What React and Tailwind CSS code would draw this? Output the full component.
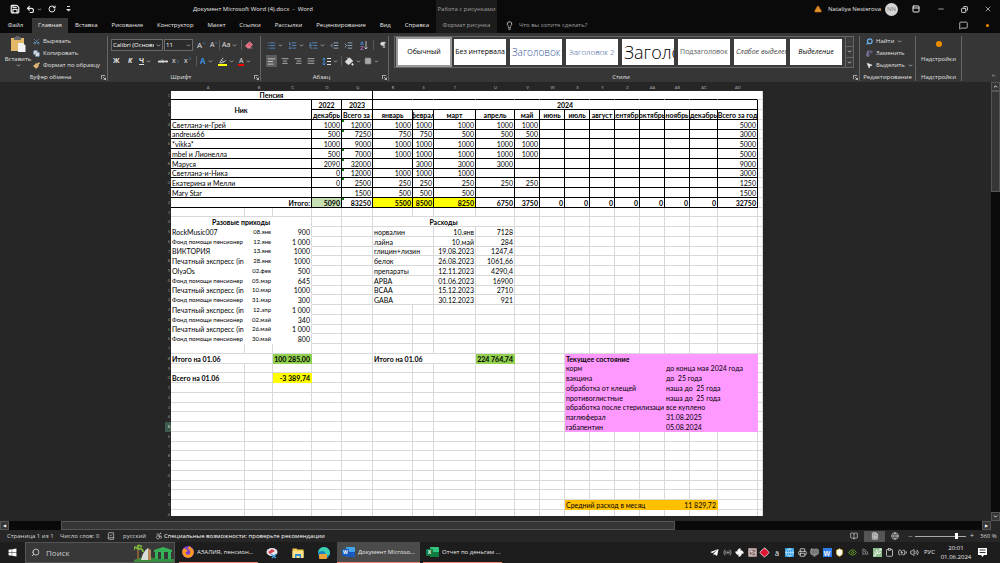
import React from 'react'
import {
  Save, Undo2, RotateCw, ChevronDown, ChevronUp, Scissors, Copy, Paintbrush, Clipboard, Eraser,
  List, ListOrdered, ListTree, IndentDecrease, IndentIncrease, Pilcrow, AlignLeft, AlignCenter,
  AlignRight, AlignJustify, PaintBucket, Grid2x2, Lightbulb, TriangleAlert, Minus, X, MessageSquare,
  Search, Replace, MousePointer2, BookOpen, FileText, Globe, Accessibility, BookCheck, Fan,
  Shield, Wifi, BatteryCharging, Volume2, Monitor, Usb, Eye, Highlighter,
  PanelTop, Radio, Image, Printer
} from 'lucide-react'
import { FaWindows, FaFirefoxBrowser, FaTelegramPlane } from 'react-icons/fa'

const tabs = ['Вставка', 'Рисование', 'Конструктор', 'Макет', 'Ссылки', 'Рассылки', 'Рецензирование', 'Вид', 'Справка']

const styleCards = [
  { name: 'Обычный', cls: 'justify-center text-[7px] text-black' },
  { name: 'Без интервала', cls: 'justify-center text-[7px] text-black' },
  { name: 'Заголовок 1', cls: 'pl-[2px] text-[10px] font-light text-[#2f5496]' },
  { name: 'Заголовок 2', cls: 'justify-center text-[8px] font-light text-[#2f5496]' },
  { name: 'Заголовок', cls: 'pl-[2px] text-[18px] font-light text-black' },
  { name: 'Подзаголовок', cls: 'justify-center text-[7px] text-[#5a5a5a]' },
  { name: 'Слабое выделение', cls: 'pl-[2px] text-[7px] italic text-[#404040]' },
  { name: 'Выделение', cls: 'justify-center text-[7px] italic text-black' }
]

// Sheet columns, D is followed by Q because the ones between are hidden
const columns = ['A', 'B', 'C', 'D', 'Q', 'R', 'S', 'T', 'U', 'V', 'W', 'X', 'Y', 'Z', 'AA', 'AB', 'AC', 'AD', '']
const colWidths = [74, 28, 39, 30, 31, 40, 21, 42, 39, 25, 25, 25, 25, 25, 25, 25, 28, 40, 5]

const members = [
  ['Светлана-и-Грей', '1000', '12000', '1000', '1000', '1000', '1000', '1000', '5000'],
  ['andreus66', '500', '7250', '750', '750', '500', '500', '500', '3000'],
  ['*vikka*', '1000', '9000', '1000', '1000', '1000', '1000', '1000', '5000'],
  ['mbel и Лионелла', '500', '7000', '1000', '1000', '1000', '1000', '1000', '5000'],
  ['Маруся', '2090', '32000', '', '3000', '3000', '3000', '', '9000'],
  ['Светлана-и-Ника', '0', '12000', '1000', '1000', '1000', '', '', '3000'],
  ['Екатерина и Мелли', '0', '2500', '250', '250', '250', '250', '250', '1250'],
  ['Mary Star', '', '1500', '500', '500', '500', '', '', '1500']
]

const incomes = [
  ['RockMusic007', '08.янв', '900'],
  ['Фонд помощи пенсионер', '12.янв', '1 000'],
  ['ВИКТОРИЯ', '13.янв', '1000'],
  ['Печатный экспресс (in', '28.янв', '1000'],
  ['OlyaOs', '02.фев', '500'],
  ['Фонд помощи пенсионер', '05.мар', '645'],
  ['Печатный экспресс (in', '10.мар', '1000'],
  ['Фонд помощи пенсионер', '31.мар', '300'],
  ['Печатный экспресс (in', '12.апр', '1 000'],
  ['Фонд помощи пенсионер', '02.май', '340'],
  ['Печатный экспресс (in', '26.май', '1 000'],
  ['Фонд помощи пенсионер', '30.май', '800']
]

const expenses = [
  ['норвалин', '10.янв', '7128'],
  ['лайна', '10.май', '284'],
  ['глицин+лизин', '19.08.2023', '1247,4'],
  ['белок', '26.08.2023', '1061,66'],
  ['препараты', '12.11.2023', '4290,4'],
  ['АРВА', '01.06.2023', '16900'],
  ['BCAA', '15.12.2023', '2710'],
  ['GABA', '30.12.2023', '921']
]

const state = [
  ['корм', 'до конца мая 2024 года'],
  ['вакцина', 'до  25 года'],
  ['обработка от клещей', 'наша до  25 года'],
  ['противоглистные', 'наша до  25 года'],
  ['обработка после стерилизаци', 'все куплено'],
  ['паглюферал', '31.08.2025'],
  ['габапентин', '05.08.2024']
]

const black = 'border-black'
const none = 'border-transparent'
const pink = 'bg-[#ff99ff] border-[#ff99ff]'
const orange = 'bg-[#ffc000] border-[#ffc000]'

// Every row is a map of column index to cell, columns without an entry are drawn as empty grid cells
const buildRows = () => {
  const rows = Array.from({ length: 44 }, () => ({}))

  rows[0][0] = { text: 'Пенсия', span: 5, align: 'center', bold: true, cls: black }
  for (let c = 5; c < 18; c++) rows[0][c] = { cls: 'border-r-transparent border-b-black' }
  rows[1][0] = { text: 'Ник', span: 3, rowSpan: 2, align: 'center', bold: true, cls: black }
  rows[1][3] = { text: '2022', align: 'center', bold: true, cls: black }
  rows[1][4] = { text: '2023', align: 'center', bold: true, cls: black }
  rows[1][5] = { text: '2024', span: 13, align: 'center', bold: true, cls: black }

  const heads = ['декабрь', 'Всего за г', 'январь', 'феврал', 'март', 'апрель', 'май', 'июнь', 'июль', 'август', 'сентябрь', 'октябрь', 'ноябрь', 'декабрь', 'Всего за год']
  rows[2][0] = { covered: true, span: 3 }
  heads.forEach((text, i) => {
    rows[2][i + 3] = { text, align: i === 1 ? 'left' : 'center', bold: true, cls: black }
  })

  members.forEach((m, i) => {
    const row = rows[i + 3]
    row[0] = { text: m[0], span: 3, cls: black }
    for (let c = 3; c < 18; c++) row[c] = { cls: black }
    m.slice(1, 8).forEach((text, k) => {
      row[k + 3] = { text, align: 'right', cls: black, flag: k === 1 && i !== 2 && i !== 7 }
    })
    row[17] = { text: m[8], align: 'right', cls: black }
  })

  const totals = ['5090', '83250', '5500', '8500', '8250', '6750', '3750', '0', '0', '0', '0', '0', '0', '0', '32750']
  rows[11][0] = { text: 'Итого:', span: 3, align: 'right', bold: true, cls: black }
  totals.forEach((text, i) => {
    const fill = i === 0 ? 'bg-[#c6e0b4] border-black' : i > 1 && i < 5 ? 'bg-[#ffff00] border-black' : black
    rows[11][i + 3] = { text, align: 'right', bold: true, cls: fill, flag: i === 1 }
  })

  rows[13][0] = { text: 'Разовые приходы', span: 3, align: 'center', bold: true, cls: 'border-r-[#d9d9d9] border-b-transparent' }
  rows[13][5] = { text: 'Расходы', span: 4, align: 'center', bold: true }
  incomes.forEach((item, i) => {
    rows[i + 14][0] = { text: item[0], small: item[0].startsWith('Фонд'), cls: none }
    rows[i + 14][1] = { text: item[1], align: 'right', small: true, cls: none }
    rows[i + 14][2] = { text: item[2], align: 'right', cls: 'border-r-[#d9d9d9] border-b-transparent' }
  })
  expenses.forEach((item, i) => {
    rows[i + 14][5] = { text: item[0], span: 2 }
    rows[i + 14][7] = { text: item[1], align: 'right' }
    rows[i + 14][8] = { text: item[2], align: 'right' }
  })

  rows[27][0] = { text: 'Итого на 01.06', span: 2, bold: true }
  rows[27][2] = { text: '100 285,00', align: 'right', bold: true, cls: 'bg-[#92d050] border-[#92d050]' }
  rows[27][5] = { text: 'Итого на 01.06', span: 3, bold: true }
  rows[27][8] = { text: '224 764,74', align: 'right', bold: true, cls: 'bg-[#92d050] border-[#92d050]' }
  rows[29][0] = { text: 'Всего на 01.06', bold: true }
  rows[29][2] = { text: '-3 389,74', align: 'right', bold: true, cls: 'bg-[#ffff00] border-[#ffff00]' }

  rows[27][11] = { text: 'Текущее состояние', span: 7, bold: true, cls: pink }
  state.forEach((item, i) => {
    rows[i + 28][11] = { text: item[0], span: 4, cls: pink }
    rows[i + 28][15] = { text: item[1], span: 3, cls: pink }
  })
  rows[42][11] = { text: 'Средний расход в месяц', span: 4, cls: orange }
  rows[42][15] = { text: '11 829,72', span: 2, align: 'right', cls: orange }
  return rows
}

const alignments = { left: 'justify-start pl-px', center: 'justify-center', right: 'justify-end pr-px' }

const Cell = ({ cell = {} }) => (
  <td
    colSpan={cell.span || 1}
    rowSpan={cell.rowSpan || 1}
    className={`relative border-r border-b p-0 align-middle ${cell.cls || 'border-[#d9d9d9]'}`}
  >
    {cell.flag && <span className="absolute left-0 top-0 w-[2px] h-[2px] bg-[#107c10]" />}
    <div className={`flex h-2 overflow-hidden whitespace-pre leading-2 ${alignments[cell.align || 'left']} ${cell.bold ? 'font-bold' : ''} ${cell.small ? 'text-[6px]' : ''}`}>
      <span className="shrink-0">{cell.text}</span>
    </div>
  </td>
)

const Sheet = () => (
  <table className="table-fixed w-[598px] border-separate border-spacing-0 font-['Lato','Open_Sans',sans-serif] text-[7px] leading-2 text-black">
    <colgroup>
      <col className="w-[6px]" />
      {colWidths.map((w, i) => <col key={i} style={{ width: w }} />)}
    </colgroup>
    <thead>
      <tr className="h-[7px] text-[4px] leading-[7px] text-[#b0b0b0]">
        <th className="p-0" />
        {columns.map((name, i) => <th key={i} className="p-0 font-normal">{name}</th>)}
      </tr>
    </thead>
    <tbody className="bg-white [&>tr]:h-[10px] [&>tr:nth-child(4n+1)]:h-[9px]">
      {buildRows().map((row, r) => {
        const cells = []
        for (let c = 0; c < columns.length; c += row[c]?.span || 1) {
          if (!row[c]?.covered) cells.push(<Cell key={c} cell={row[c]} />)
        }
        return (
          <tr key={r}>
            <th className={`p-0 pr-px text-right text-[4px] font-normal leading-2 ${r === 34 ? 'bg-[#3d5a4c] text-white' : 'bg-[#262626] text-[#9a9a9a]'}`}>{(r + 1) % 10}</th>
            {cells}
          </tr>
        )
      })}
    </tbody>
  </table>
)

const Drop = () => <ChevronDown className="w-[5px] h-[5px] shrink-0" strokeWidth={3} />

const Divider = () => <span className="h-[10px] w-px bg-[#5a5a5a]" />

const IconButton = ({ label, children, drop, cls = '' }) => (
  <button aria-label={label} className={`flex h-3 items-center gap-[2px] ${cls}`}>
    {children}
    {drop && <Drop />}
  </button>
)

const Group = ({ title, cls, children, launcher }) => (
  <section className={`flex flex-col pt-[3px] ${cls}`}>
    <div className="flex flex-1 border-r border-[#666] mb-px flex-col">
      <div className="flex-1">{children}</div>
      <div className="flex h-2 items-center">
        <h2 className="flex-1 whitespace-nowrap text-center text-[6px] leading-2 text-[#e0e0e0]">{title}</h2>
        {launcher && (
          <button aria-label={`${title}: параметры`} className="mr-px">
            <svg viewBox="0 0 6 6" className="w-[5px] h-[5px]" fill="none" stroke="#ccc"><path d="M.5 5V.5H5M2.5 2.5l3 3M5.5 3v2.5H3" /></svg>
          </button>
        )}
      </div>
    </div>
  </section>
)

const TitleBar = () => (
  <header className="flex h-[18px] items-stretch bg-[#0a0a0a] text-[6px] text-[#e8e8e8]">
    <div className="flex w-[193px] items-center pl-[10px]">
      <button aria-label="Сохранить"><Save className="w-[10px] h-[10px]" strokeWidth={3} /></button>
      <button aria-label="Отменить" className="ml-[6px] flex items-center gap-[2px]"><Undo2 className="w-[9px] h-[9px]" strokeWidth={3} /><Drop /></button>
      <button aria-label="Повторить" className="ml-[6px]"><RotateCw className="w-2 h-2" strokeWidth={3} /></button>
      <button aria-label="Настройка панели" className="ml-[10px]">
        <svg viewBox="0 0 5 6" className="h-[6px] w-[5px]" fill="#ddd"><path d="M1 0h3v1H1zM0 3h5L2.500 5.500z" /></svg>
      </button>
    </div>
    <h1 className="flex w-[243px] items-center whitespace-pre">Документ Microsoft Word (4).docx  -  Word</h1>
    <div className="flex w-[61px] items-center justify-center bg-[#1c1c1c] text-[#a0a0a0] whitespace-nowrap">Работа с рисунками</div>
    <div className="ml-auto flex items-center pr-2">
      <TriangleAlert className="w-2 h-2 fill-[#e8962e] text-[#b86a10]" />
      <span className="ml-[6px] whitespace-nowrap">Nataliya Nesterova</span>
      <span className="ml-1 flex h-[13px] w-[13px] items-center justify-center rounded-full bg-[#d5d5d5] text-[#777]">NN</span>
      <button aria-label="Параметры ленты" className="ml-[14px]"><PanelTop className="w-2 h-2" strokeWidth={3} /></button>
      <button aria-label="Свернуть" className="ml-[17px]"><Minus className="w-2 h-2" /></button>
      <button aria-label="Восстановить" className="ml-[16px]"><Copy className="w-[7px] h-[7px] -scale-x-100" strokeWidth={3} /></button>
      <button aria-label="Закрыть" className="ml-[16px]"><X className="w-2 h-2" /></button>
    </div>
  </header>
)

const TabBar = () => (
  <nav className="flex h-[15px] items-stretch bg-[#0a0a0a] text-[6px] text-[#e8e8e8]">
    <button className="w-[32px] pr-px">Файл</button>
    <button className="w-[36px] bg-[#363636]">Главная</button>
    <div className="flex w-[368px] justify-around">
      {tabs.map((name) => <button key={name}>{name}</button>)}
    </div>
    <button className="w-[61px] bg-[#1c1c1c] text-[#a0a0a0] whitespace-nowrap">Формат рисунка</button>
    <label className="flex items-center pl-[8px]">
      <Lightbulb className="w-[9px] h-[9px]" />
      <input aria-label="Что вы хотите сделать?" placeholder="Что вы хотите сделать?" className="ml-[5px] w-24 bg-transparent outline-none placeholder:text-[#a0a0a0]" />
    </label>
    <div className="ml-auto flex items-center gap-[18px] pr-[11px]">
      <button aria-label="Примечания"><MessageSquare className="w-[9px] h-[9px]" /></button>
      <span className="h-[3px] w-[3px] rounded-full bg-[#f08c00]" />
    </div>
  </nav>
)

const Combo = ({ label, value, cls }) => (
  <div className={`relative h-3 border border-[#6a6a6a] bg-[#2b2b2b] ${cls}`}>
    <select aria-label={label} className="block h-full w-full appearance-none overflow-hidden bg-transparent pl-px pr-2 text-[6px] leading-[10px] text-white">
      <option>{value}</option>
    </select>
    <ChevronDown className="pointer-events-none absolute right-px top-[3px] w-[5px] h-[5px]" strokeWidth={3} />
  </div>
)

const SortIcon = () => (
  <svg viewBox="0 0 8 9" className="h-[9px] w-2" fill="none">
    <path d="M.5 4L2 .5 3.500 4M1 3h2" stroke="#3c8fdd" strokeWidth=".8" />
    <path d="M.5 5.500h3L.5 8.500h3" stroke="#b06ac8" strokeWidth=".8" />
    <path d="M6 0v8M4.500 6.500L6 8l1.500-1.500" stroke="#ddd" strokeWidth=".8" />
  </svg>
)

const SpacingIcon = () => (
  <svg viewBox="0 0 9 9" className="h-[9px] w-[9px]" fill="none">
    <path d="M2 1v7M.5 2.500L2 1l1.500 1.500M.5 6.500L2 8l1.500-1.500" stroke="#3c8fdd" />
    <path d="M5 1.500h4M5 4.500h4M5 7.500h4" stroke="#ddd" />
  </svg>
)

const Ribbon = () => (
  <div className="flex h-[49px] bg-[#363636] text-[6px] leading-2 text-[#e0e0e0]">
    <Group title="Буфер обмена" cls="w-[108px]" launcher>
      <div className="flex pl-[5px]">
        <button className="flex w-[26px] flex-col items-center">
          <svg viewBox="0 0 16 16" className="h-4 w-4">
            <path d="M1 2h13v13H1z" fill="#e5b868" />
            <path d="M4 1h2a1.500 1.500 0 0 1 3 0h2v3H4z" fill="#666" />
            <path d="M8 7h5l2.500 2.500V16H8z" fill="#f2f2f2" />
          </svg>
          <span className="mt-[3px]">Вставить</span>
          <Drop />
        </button>
        <div className="flex flex-col items-start gap-[2px] pl-[2px]">
          <button className="flex h-[10px] items-center gap-[3px]"><Scissors className="h-[7px] w-[7px] -rotate-90 text-[#7ba7d4]" />Вырезать</button>
          <button className="flex h-[10px] items-center gap-[3px]"><Copy className="h-[7px] w-[7px] fill-[#ddd] text-[#5b8fc7]" />Копировать</button>
          <button className="flex h-[10px] items-center gap-[3px] whitespace-nowrap"><Paintbrush className="h-[7px] w-[7px] fill-[#e5b868] text-[#e5c898]" />Формат по образцу</button>
        </div>
      </div>
    </Group>

    <Group title="Шрифт" cls="w-[153px]" launcher>
      <div className="flex items-center pl-[3px] pt-[3px]">
        <Combo label="Шрифт" value="Calibri (Основной текст)" cls="w-[52px]" />
        <Combo label="Размер" value="11" cls="ml-px w-[29px]" />
        <IconButton label="Увеличить шрифт" cls="ml-1 w-[13px] text-[8px]">A<ChevronUp className="-ml-[2px] mb-1 h-1 w-1 text-[#3c8fdd]" strokeWidth={4} /></IconButton>
        <IconButton label="Уменьшить шрифт" cls="w-[9px] text-[7px]">A<ChevronDown className="-ml-[2px] mb-1 h-1 w-1 text-[#3c8fdd]" strokeWidth={4} /></IconButton>
        <Divider />
        <IconButton label="Регистр" drop cls="ml-[2px] mr-[4px] text-[7px]">Aa</IconButton>
        <Divider />
        <IconButton label="Очистить форматирование" cls="ml-[3px]"><Eraser className="h-2 w-2 fill-[#e0607a] text-[#e89aac]" /></IconButton>
      </div>
      <div className="flex items-center pl-[5px] pt-1 text-[7px]">
        <IconButton label="Полужирный" cls="w-[15px]"><b>Ж</b></IconButton>
        <IconButton label="Курсив" cls="w-[11px]"><b><i>К</i></b></IconButton>
        <IconButton label="Подчеркнутый" drop cls="w-[19px]"><b className="underline">Ч</b></IconButton>
        <IconButton label="Зачеркнутый" cls="w-[14px]"><s className="text-[6px]">abc</s></IconButton>
        <IconButton label="Подстрочный" cls="w-3">x<sub className="-ml-px text-[4px] text-[#3c8fdd]">2</sub></IconButton>
        <IconButton label="Надстрочный" cls="w-3">x<sup className="-ml-px text-[4px] text-[#3c8fdd]">2</sup></IconButton>
        <Divider />
        <IconButton label="Эффекты" drop cls="w-[21px] pl-[3px]"><span className="text-[8px] font-bold text-[#3c8fdd]">A</span></IconButton>
        <IconButton label="Выделение цветом" drop cls="w-[20px]"><Highlighter className="h-[9px] w-[9px] border-b-2 border-[#ffff00]" strokeWidth={3} /></IconButton>
        <IconButton label="Цвет текста" drop><span className="h-[9px] border-b-2 border-[#ff0000] px-px leading-[7px]">A</span></IconButton>
      </div>
    </Group>

    <Group title="Абзац" cls="w-[128px]" launcher>
      <div className="flex items-center gap-[5px] pl-[6px] pt-[3px]">
        <IconButton label="Маркеры" drop><List className="h-[9px] w-[9px] text-[#5d9bd8]" /></IconButton>
        <IconButton label="Нумерация" drop><ListOrdered className="h-[9px] w-[9px] text-[#5d9bd8]" /></IconButton>
        <IconButton label="Многоуровневый список" drop><ListTree className="h-[9px] w-[9px] text-[#5d9bd8]" /></IconButton>
        <IconButton label="Уменьшить отступ"><IndentDecrease className="h-[9px] w-[9px] text-[#a8c8e8]" /></IconButton>
        <IconButton label="Увеличить отступ"><IndentIncrease className="h-[9px] w-[9px] text-[#a8c8e8]" /></IconButton>
        <IconButton label="Сортировка" cls="ml-[2px]"><SortIcon /></IconButton>
        <Divider />
        <IconButton label="Знаки"><Pilcrow className="h-2 w-2 fill-[#ddd]" /></IconButton>
      </div>
      <div className="flex items-center gap-[3px] pl-[5px] pt-1">
        <IconButton label="По левому краю" cls="bg-[#5c5c5c] px-px"><AlignLeft className="h-[9px] w-[9px]" /></IconButton>
        <IconButton label="По центру" cls="px-px"><AlignCenter className="h-2 w-2" /></IconButton>
        <IconButton label="По правому краю" cls="px-px"><AlignRight className="h-2 w-2" /></IconButton>
        <IconButton label="По ширине" cls="px-px"><AlignJustify className="h-2 w-2" /></IconButton>
        <IconButton label="Интервал" drop cls="ml-[3px]"><SpacingIcon /></IconButton>
        <Divider />
        <IconButton label="Заливка" drop><PaintBucket className="h-[9px] w-[9px] fill-[#ddd]" /></IconButton>
        <IconButton label="Границы" drop><Grid2x2 className="h-2 w-2 fill-[#aaa] text-[#777]" /></IconButton>
      </div>
    </Group>

    <Group title="Стили" cls="min-w-0 flex-1" launcher>
      <div className="mx-[5px] flex h-8 items-stretch overflow-hidden border border-[#666] bg-[#3c3c3c]">
        <div className="flex flex-1 items-center gap-[4px] overflow-hidden pl-[3px]">
          {styleCards.map((card, i) => (
            <button
              key={card.name}
              className={`flex h-[26px] w-[52px] shrink-0 items-center overflow-hidden whitespace-nowrap bg-white ${i === 0 ? 'outline-2 outline-[#9a9a9a]' : ''} ${card.cls}`}
            >
              {card.name}
            </button>
          ))}
        </div>
        <div className="flex w-2 flex-col divide-y divide-[#666] border-l border-[#666]">
          <button aria-label="Вверх" className="flex flex-1 items-center justify-center text-[#666]"><ChevronUp className="h-[5px] w-[5px]" /></button>
          <button aria-label="Вниз" className="flex flex-1 items-center justify-center"><ChevronDown className="h-[5px] w-[5px]" strokeWidth={4} /></button>
          <button aria-label="Все стили" className="flex flex-1 items-center justify-center"><ChevronDown className="h-[5px] w-[5px]" strokeWidth={4} /></button>
        </div>
      </div>
    </Group>

    <Group title="Редактирование" cls="w-[56px]">
      <div className="flex flex-col items-start gap-[2px] pl-[6px]">
        <button className="flex h-[10px] items-center gap-[3px]"><Search className="h-[7px] w-[7px] -scale-x-100 text-[#6ab0ee]" strokeWidth={4} />Найти<Drop /></button>
        <button className="flex h-[10px] items-center gap-[3px]"><Replace className="h-[7px] w-[7px] text-[#9a8fd0]" strokeWidth={3} />Заменить</button>
        <button className="flex h-[10px] items-center gap-[3px]"><MousePointer2 className="h-[7px] w-[7px] fill-[#eee]" />Выделить<Drop /></button>
      </div>
    </Group>

    <Group title="Надстройки" cls="w-[46px]">
      <button className="flex w-full flex-col items-center pt-[5px]">
        <span className="h-[6px] w-[6px] rounded-full bg-[#f08c00]" />
        <span className="mt-2">Надстройки</span>
      </button>
    </Group>
    <div className="flex w-[38px] items-end justify-end p-1">
      <button aria-label="Свернуть ленту"><ChevronUp className="h-[5px] w-[5px]" strokeWidth={3} /></button>
    </div>
  </div>
)

const StatusBar = () => (
  <footer className="flex h-3 items-center bg-[#262626] pl-[7px] text-[6px] leading-2 text-[#d8d8d8] whitespace-nowrap">
    <span className="w-[53px]">Страница 1 из 1</span>
    <span className="w-[47px]">Число слов: 0</span>
    <BookCheck className="h-2 w-2" />
    <span className="ml-2 w-[32px]">русский</span>
    <Accessibility className="h-2 w-2" />
    <span className="ml-px font-medium text-white">Специальные возможности: проверьте рекомендации</span>
    <div className="ml-auto flex items-center">
      <button aria-label="Режим чтения" className="mr-[6px]"><BookOpen className="h-2 w-2" /></button>
      <button aria-label="Разметка страницы" className="flex h-[11px] w-[21px] items-center justify-center bg-[#555]"><FileText className="h-2 w-2 fill-[#999]" /></button>
      <button aria-label="Веб-документ" className="ml-[6px]"><Globe className="h-2 w-2" /></button>
      <button aria-label="Мельче" className="ml-[9px]"><Minus className="h-[5px] w-[5px]" /></button>
      <input
        type="range"
        aria-label="Масштаб"
        defaultValue={84}
        className="mx-[2px] h-2 w-[51px] appearance-none bg-[linear-gradient(#aaa,#aaa)] bg-[length:100%_1px] bg-center bg-no-repeat [&::-webkit-slider-thumb]:h-[6px] [&::-webkit-slider-thumb]:w-[3px] [&::-webkit-slider-thumb]:appearance-none [&::-webkit-slider-thumb]:bg-white"
      />
      <button aria-label="Крупнее" className="w-2 text-[7px]">+</button>
      <span className="w-[24px] pl-[4px]">360 %</span>
    </div>
  </footer>
)

const TaskButton = ({ icon, active, children }) => (
  <button className={`flex items-center gap-[3px] border-b border-[#f08a78] pl-[3px] whitespace-nowrap text-[6px] ${active ? 'w-[83px] bg-[#4b4b4b] pl-[5px]' : 'w-[79px]'}`}>
    {icon}
    <span className="truncate">{children}</span>
  </button>
)

const OfficeIcon = ({ letter, light, dark }) => (
  <svg viewBox="0 0 13 12" className="h-3 w-[13px] shrink-0">
    <rect x="4" y="1" width="9" height="10" rx="1" fill={light} />
    <path d="M4 6h9v4a1 1 0 0 1-1 1H5a1 1 0 0 1-1-1z" fill={dark} />
    <rect y="3" width="7" height="7" rx="1" fill={dark} />
    <text x="3.500" y="8" fontSize="5" fontWeight="700" textAnchor="middle" fill="#fff">{letter}</text>
  </svg>
)

const SearchArt = () => (
  <svg viewBox="0 0 40 18" className="h-[18px] w-[40px] shrink-0">
    <path d="M0 16q10-5 20-2t20 1v3H0z" fill="#3f8a3a" />
    <path d="M4 15V5" stroke="#9a6b3a" strokeWidth="1.500" />
    <path d="M4 5Q0 1 0 6M4 5Q3-1 8 3M4 5q5-1 5 3" stroke="#7db53c" strokeWidth="2" fill="none" />
    <path d="M7 16Q9 7 14 4l3 12z" fill="#d7dfd8" />
    <path d="M14 4v12h3V6z" fill="#b58a5a" />
    <path d="M20 6l9-3 9 3v2H20zM21 8h3v8h-3zM27 8h3v8h-3zM34 8h3v8h-3z" fill="#35b257" />
    <path d="M19 15h20v2H19z" fill="#2a9447" />
  </svg>
)

const FirefoxIcon = () => (
  <span className="flex h-3 w-3 shrink-0 items-center justify-center rounded-full bg-[#7a3fd0]">
    <FaFirefoxBrowser className="h-3 w-3 text-[#ff9a1c]" />
  </span>
)

const trayIcons = [
  { Icon: FaTelegramPlane, cls: 'text-white' },
  { Icon: Radio, cls: 'text-[#aaa]' },
  { Icon: Fan, cls: 'fill-white' },
  { Icon: Image, cls: 'bg-[#8a6a6a] text-[#eee]' },
  { Icon: Grid2x2, cls: 'rotate-45 fill-[#e01030] text-[#eee]' },
  { text: 'ā' },
  { Icon: Globe, cls: 'bg-[#2d9be0] text-[#bfe6ff]' },
  { Icon: Printer, cls: '' },
  { Icon: Monitor, cls: 'fill-[#777] text-[#aaa]' },
  { text: 'w' },
  { Icon: Shield, cls: 'fill-white text-[#f2b21a]' },
  { Icon: Eye, cls: 'text-[#6fb52c]' },
  { Icon: Wifi, cls: 'rotate-45 text-[#aaa]' },
  { Icon: Usb, cls: 'bg-[#8fbf8f] text-white' },
  { Icon: Clipboard, cls: '' },
  { Icon: BatteryCharging, cls: '' },
  { Icon: Volume2, cls: '' }
]

const Taskbar = () => (
  <div className="flex h-[21px] items-stretch bg-[#1d1d1d] text-[6px] text-[#e8e8e8]">
    <button aria-label="Пуск" className="flex w-[25px] items-center justify-center"><FaWindows className="h-[9px] w-[9px] text-white" /></button>
    <label className="flex w-[150px] items-center overflow-hidden border border-[#555] bg-[#383838] pl-[5px]">
      <Search className="h-[9px] w-[9px] shrink-0 -scale-x-100" />
      <input aria-label="Поиск" placeholder="Поиск" className="ml-[6px] min-w-0 flex-1 bg-transparent text-[8px] outline-none placeholder:text-[#c8c8c8]" />
      <SearchArt />
    </label>
    <div className="ml-1 flex">
      <TaskButton icon={<FirefoxIcon />}>АЗАЛИЯ, пенсион...</TaskButton>
    </div>
    <div className="flex w-[79px] items-center justify-center gap-[14px]">
      <button aria-label="Ножницы">
        <svg viewBox="0 0 12 12" className="h-3 w-3"><ellipse cx="6" cy="5" rx="5.500" ry="4" fill="#e9e9ee" /><path d="M2 5l4-3 3 2-5 3z" fill="#d64550" /><path d="M5 7l5 4M10 7l-4 4" stroke="#4aa3e0" strokeWidth="1.500" /></svg>
      </button>
      <button aria-label="Проводник">
        <svg viewBox="0 0 12 12" className="h-3 w-3"><path d="M.5 1.500h4l1 1h6V11H.5z" fill="#f8cf4c" /><path d="M.5 4h11v7H.5z" fill="#ffe08a" /><path d="M3 11V7h6v4H7.500V9h-3v2z" fill="#2d8fd8" /></svg>
      </button>
      <button aria-label="Edge">
        <svg viewBox="0 0 12 12" className="h-3 w-3"><circle cx="6" cy="6" r="6" fill="#1b7fc4" /><path d="M0 6a6 6 0 0 1 12 0q0 2.500-3 2.500-2 0-1.500-2Q7 4 4.500 4 1.500 4 0 6z" fill="#3fd0b0" /><rect x="1" y="7" width="8" height="5" rx="1" fill="#e8a33a" /></svg>
      </button>
    </div>
    <div className="flex gap-[3px]">
      <TaskButton active icon={<OfficeIcon letter="W" light="#41a5ee" dark="#185abd" />}>Документ Microso...</TaskButton>
      <TaskButton icon={<OfficeIcon letter="X" light="#33c481" dark="#107c41" />}>Отчет по деньгам ...</TaskButton>
    </div>
    <div className="ml-auto flex items-center">
      <div className="flex w-[209px] items-center justify-between">
        {trayIcons.map(({ Icon, cls, text }, i) => (
          Icon
            ? <Icon key={i} className={`h-[9px] w-[9px] ${cls}`} />
            : <span key={i} className={`w-[9px] text-center text-[8px] leading-[9px] ${text === 'w' ? 'bg-[#2d7ff0] font-bold' : ''}`}>{text}</span>
        ))}
      </div>
      <span className="ml-[5px] w-[14px]">РУС</span>
      <time className="w-[36px] text-center leading-[9px]">20:01<br />01.06.2024</time>
      <button aria-label="Уведомления" className="ml-1 mr-[13px]">
        <svg viewBox="0 0 9 9" className="h-[9px] w-[9px]"><path d="M0 0h9v7H6L4.500 9 3 7H0z" fill="#fff" /><path d="M1.500 2h6M1.500 4.500h6" stroke="#333" /></svg>
      </button>
    </div>
  </div>
)

const App = () => (
  <div className="flex h-screen flex-col overflow-hidden bg-[#262626] font-['Open_Sans','Noto_Sans',sans-serif]">
    <TitleBar />
    <TabBar />
    <Ribbon />
    <main className="flex min-h-0 flex-1">
      <div className="min-w-0 flex-1 pb-[5px] pl-[165px] pt-[2px]">
        <div className="h-full overflow-hidden">
          <Sheet />
        </div>
      </div>
      <div className="flex w-[9px] flex-col items-center bg-[#0a0a0a] text-white">
        <button aria-label="Прокрутить вверх" className="flex h-[9px] w-full items-center justify-center border border-[#555] bg-[#363636]"><ChevronUp className="h-[5px] w-[5px]" strokeWidth={4} /></button>
        <div className="h-[101px] w-full border border-[#555] bg-[#363636]" />
        <button aria-label="Прокрутить вниз" className="mt-auto flex h-[9px] w-full items-center justify-center border border-[#555] bg-[#363636]"><ChevronDown className="h-[5px] w-[5px]" strokeWidth={4} /></button>
      </div>
    </main>
    <div className="mr-[9px] flex h-[9px] items-stretch bg-[#0a0a0a] text-[4px] text-white">
      <button aria-label="Прокрутить влево" className="w-[9px] border border-[#555] bg-[#363636] leading-1">◀</button>
      <div className="ml-[52px] w-[62%] border border-[#555] bg-[#363636]" />
      <button aria-label="Прокрутить вправо" className="ml-auto w-[9px] border border-[#555] bg-[#363636] leading-1">▶</button>
    </div>
    <StatusBar />
    <Taskbar />
  </div>
)

export default App
